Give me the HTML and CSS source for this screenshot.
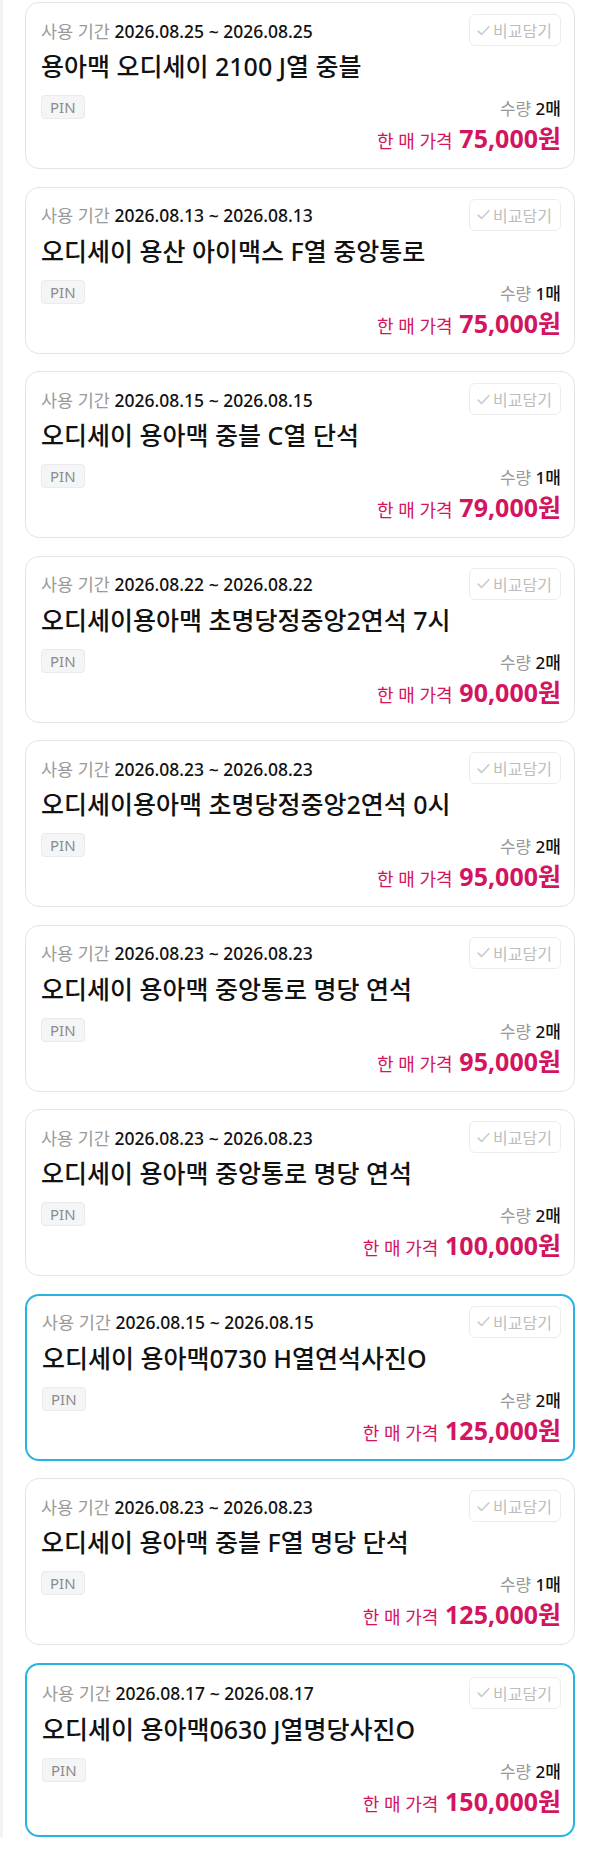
FILE: index.html
```html
<!DOCTYPE html>
<html lang="ko">
<head>
  <meta charset="UTF-8" />
  <meta name="viewport" content="width=device-width, initial-scale=1" />
  <title>티켓 목록</title>
  <link rel="stylesheet" href="styles.css">
</head>
<body>
  <div class="list">

    <div class="card">
      <div class="head">
        <div class="period"><span class="label">사용 기간</span> 2026.08.25 ~ 2026.08.25</div>
        <button class="compare"><svg viewBox="0 0 14 14"><path d="M2 7.5l3.2 3.2L12 3.5"/></svg>비교담기</button>
      </div>
      <div class="title">용아맥 오디세이 2100 J열 중블</div>
      <div class="bottom">
        <span class="pin">PIN</span>
        <div class="info">
          <div class="qty"><span class="label">수량</span> 2매</div>
          <div class="price">한 매 가격 <b>75,000원</b></div>
        </div>
      </div>
    </div>

    <div class="card">
      <div class="head">
        <div class="period"><span class="label">사용 기간</span> 2026.08.13 ~ 2026.08.13</div>
        <button class="compare"><svg viewBox="0 0 14 14"><path d="M2 7.5l3.2 3.2L12 3.5"/></svg>비교담기</button>
      </div>
      <div class="title">오디세이 용산 아이맥스 F열 중앙통로</div>
      <div class="bottom">
        <span class="pin">PIN</span>
        <div class="info">
          <div class="qty"><span class="label">수량</span> 1매</div>
          <div class="price">한 매 가격 <b>75,000원</b></div>
        </div>
      </div>
    </div>

    <div class="card">
      <div class="head">
        <div class="period"><span class="label">사용 기간</span> 2026.08.15 ~ 2026.08.15</div>
        <button class="compare"><svg viewBox="0 0 14 14"><path d="M2 7.5l3.2 3.2L12 3.5"/></svg>비교담기</button>
      </div>
      <div class="title">오디세이 용아맥 중블 C열 단석</div>
      <div class="bottom">
        <span class="pin">PIN</span>
        <div class="info">
          <div class="qty"><span class="label">수량</span> 1매</div>
          <div class="price">한 매 가격 <b>79,000원</b></div>
        </div>
      </div>
    </div>

    <div class="card">
      <div class="head">
        <div class="period"><span class="label">사용 기간</span> 2026.08.22 ~ 2026.08.22</div>
        <button class="compare"><svg viewBox="0 0 14 14"><path d="M2 7.5l3.2 3.2L12 3.5"/></svg>비교담기</button>
      </div>
      <div class="title">오디세이용아맥 초명당정중앙2연석 7시</div>
      <div class="bottom">
        <span class="pin">PIN</span>
        <div class="info">
          <div class="qty"><span class="label">수량</span> 2매</div>
          <div class="price">한 매 가격 <b>90,000원</b></div>
        </div>
      </div>
    </div>

    <div class="card">
      <div class="head">
        <div class="period"><span class="label">사용 기간</span> 2026.08.23 ~ 2026.08.23</div>
        <button class="compare"><svg viewBox="0 0 14 14"><path d="M2 7.5l3.2 3.2L12 3.5"/></svg>비교담기</button>
      </div>
      <div class="title">오디세이용아맥 초명당정중앙2연석 0시</div>
      <div class="bottom">
        <span class="pin">PIN</span>
        <div class="info">
          <div class="qty"><span class="label">수량</span> 2매</div>
          <div class="price">한 매 가격 <b>95,000원</b></div>
        </div>
      </div>
    </div>

    <div class="card">
      <div class="head">
        <div class="period"><span class="label">사용 기간</span> 2026.08.23 ~ 2026.08.23</div>
        <button class="compare"><svg viewBox="0 0 14 14"><path d="M2 7.5l3.2 3.2L12 3.5"/></svg>비교담기</button>
      </div>
      <div class="title">오디세이 용아맥 중앙통로 명당 연석</div>
      <div class="bottom">
        <span class="pin">PIN</span>
        <div class="info">
          <div class="qty"><span class="label">수량</span> 2매</div>
          <div class="price">한 매 가격 <b>95,000원</b></div>
        </div>
      </div>
    </div>

    <div class="card">
      <div class="head">
        <div class="period"><span class="label">사용 기간</span> 2026.08.23 ~ 2026.08.23</div>
        <button class="compare"><svg viewBox="0 0 14 14"><path d="M2 7.5l3.2 3.2L12 3.5"/></svg>비교담기</button>
      </div>
      <div class="title">오디세이 용아맥 중앙통로 명당 연석</div>
      <div class="bottom">
        <span class="pin">PIN</span>
        <div class="info">
          <div class="qty"><span class="label">수량</span> 2매</div>
          <div class="price">한 매 가격 <b>100,000원</b></div>
        </div>
      </div>
    </div>

    <div class="card active">
      <div class="head">
        <div class="period"><span class="label">사용 기간</span> 2026.08.15 ~ 2026.08.15</div>
        <button class="compare"><svg viewBox="0 0 14 14"><path d="M2 7.5l3.2 3.2L12 3.5"/></svg>비교담기</button>
      </div>
      <div class="title">오디세이 용아맥0730 H열연석사진O</div>
      <div class="bottom">
        <span class="pin">PIN</span>
        <div class="info">
          <div class="qty"><span class="label">수량</span> 2매</div>
          <div class="price">한 매 가격 <b>125,000원</b></div>
        </div>
      </div>
    </div>

    <div class="card">
      <div class="head">
        <div class="period"><span class="label">사용 기간</span> 2026.08.23 ~ 2026.08.23</div>
        <button class="compare"><svg viewBox="0 0 14 14"><path d="M2 7.5l3.2 3.2L12 3.5"/></svg>비교담기</button>
      </div>
      <div class="title">오디세이 용아맥 중블 F열 명당 단석</div>
      <div class="bottom">
        <span class="pin">PIN</span>
        <div class="info">
          <div class="qty"><span class="label">수량</span> 1매</div>
          <div class="price">한 매 가격 <b>125,000원</b></div>
        </div>
      </div>
    </div>

    <div class="card active">
      <div class="head">
        <div class="period"><span class="label">사용 기간</span> 2026.08.17 ~ 2026.08.17</div>
        <button class="compare"><svg viewBox="0 0 14 14"><path d="M2 7.5l3.2 3.2L12 3.5"/></svg>비교담기</button>
      </div>
      <div class="title">오디세이 용아맥0630 J열명당사진O</div>
      <div class="bottom">
        <span class="pin">PIN</span>
        <div class="info">
          <div class="qty"><span class="label">수량</span> 2매</div>
          <div class="price">한 매 가격 <b>150,000원</b></div>
        </div>
      </div>
    </div>

  </div>
</body>
</html>
```

FILE: styles.css
```css
body {
  margin: 0;
  font-family: "Noto Sans", "Noto Sans CJK KR", sans-serif;
  background: #fff;
  color: #111;
  border-left: 3px solid #f3f3f3;
}

.list {
  padding: 2px 25px 0 22px;
  display: flex;
  flex-direction: column;
  gap: 17.5px;
}

.card {
  height: 167px;
  box-sizing: border-box;
  padding: 11px 13px 0 15px;
  border: 1px solid #e4e4e4;
  border-radius: 14px;
  background: #fff;
}

.card.active {
  border: 2px solid #27b4e2;
  padding: 10px 12px 0 15px;
}

.card:last-child {
  height: 174px;
  padding-top: 12px;
}

.head {
  display: flex;
  justify-content: space-between;
  align-items: center;
  height: 32px;
}

.period {
  font-size: 17.5px;
  font-weight: 500;
  color: #111;
}

.label {
  color: #9a9a9a;
  font-weight: 400;
}

.compare {
  display: flex;
  align-items: center;
  gap: 2px;
  height: 32px;
  padding: 0 8px 0 6px;
  border: 1px solid #ececec;
  border-radius: 6px;
  background: #fff;
  font-family: inherit;
  font-size: 16px;
  color: #bdbdbd;
}

.compare svg {
  width: 15px;
  height: 15px;
  fill: none;
  stroke: #cccccc;
  stroke-width: 1.6;
  stroke-linecap: round;
  stroke-linejoin: round;
}

.title {
  margin-top: 3px;
  font-size: 25px;
  font-weight: 500;
  line-height: 34px;
  color: #111;
}

.bottom {
  display: flex;
  justify-content: space-between;
  align-items: flex-start;
  margin-top: 12px;
}

.pin {
  padding: 0 8px;
  line-height: 22px;
  font-size: 15px;
  color: #8c8c8c;
  background: #f4f5f7;
  border: 1px solid #eaeaea;
  border-radius: 4px;
}

.info {
  text-align: right;
}

.qty {
  font-size: 17px;
  font-weight: 500;
  line-height: 26px;
  margin-top: 1px;
}

.price {
  font-size: 18px;
  line-height: 32px;
  color: #d3145f;
}

.price b {
  margin-left: 2px;
  font-size: 25px;
  font-weight: 700;
}
```
